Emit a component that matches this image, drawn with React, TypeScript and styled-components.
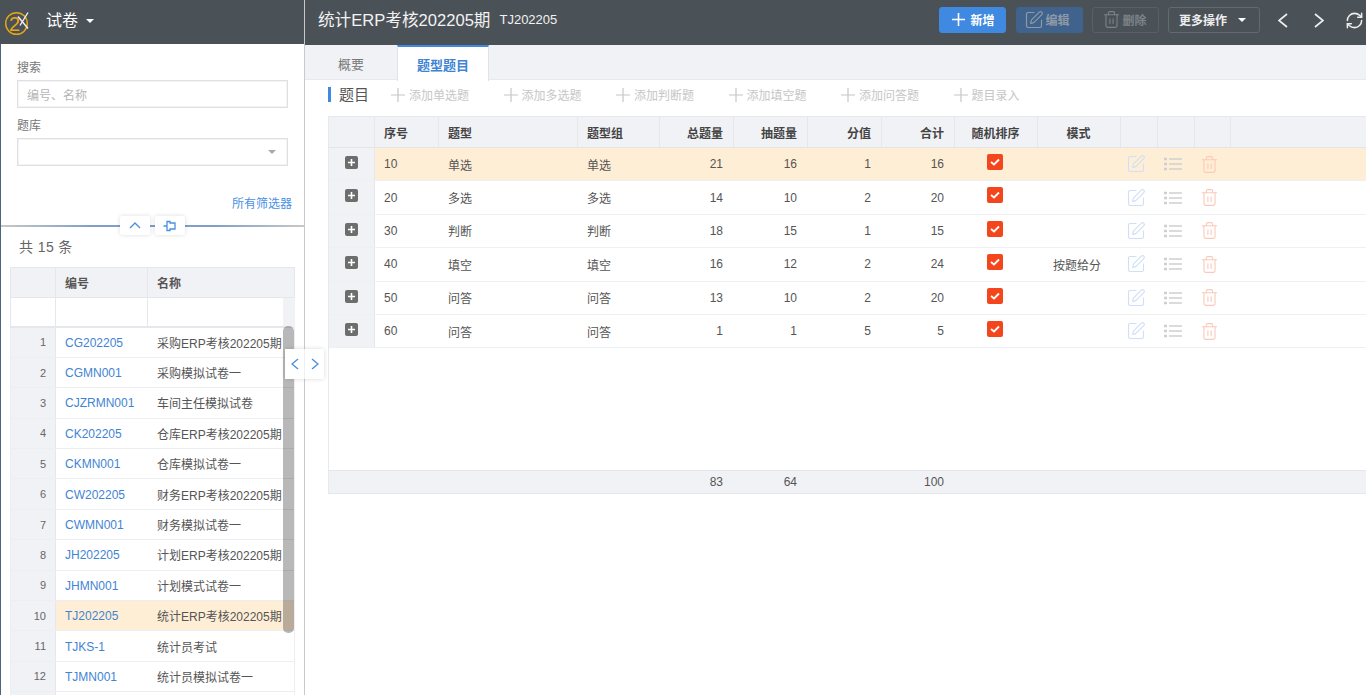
import React from 'react';
import styled, { createGlobalStyle } from 'styled-components';
import { RefreshCw, SquarePen, Trash2 } from 'lucide-react';

const GlobalStyle = createGlobalStyle`
  html, body {
    margin: 0;
    height: 100%;
    overflow: hidden;
    background: #fff;
  }
  body {
    font-family: "Liberation Sans", "Noto Sans CJK SC", sans-serif;
    font-size: 12px;
    color: #555;
  }
  * { box-sizing: border-box; }
`;

const MAIN_COLS = '46px 64px 139px 82px 74px 74px 74px 73px 83px 83px 37px 37px 36px 1fr';
const LIST_COLS = '45px 92px 1fr';

const Page = styled.div`
  display: flex;
  width: 1366px;
  height: 695px;
  overflow: hidden;
`;

const Side = styled.aside`
  position: relative;
  width: 305px;
  flex: none;
  display: flex;
  flex-direction: column;
  border-right: 1px solid #c9c9c9;
`;

const SideHead = styled.div`
  height: 44px;
  flex: none;
  background: #4a5157;
  display: flex;
  align-items: center;
  padding: 0 0 3px 2px;
  color: #fff;
  font-size: 16px;
`;

const SideTitle = styled.span`
  margin: 0 8px 3px 14px;
`;

const Caret = styled.span<{ $color?: string }>`
  display: inline-block;
  width: 0;
  height: 0;
  border-left: 4px solid transparent;
  border-right: 4px solid transparent;
  border-top: 4px solid ${p => p.$color || '#fff'};
`;

const SideBody = styled.div`
  flex: 1;
  min-height: 0;
  display: flex;
  flex-direction: column;
  border-left: 1px solid #4d6480;
`;

const Filters = styled.div`
  position: relative;
  height: 181px;
  flex: none;
  padding: 16px 16px 0 16px;
`;

const FieldLabel = styled.div<{ $compact?: boolean }>`
  height: ${p => (p.$compact ? '19px' : '20px')};
  padding-top: ${p => (p.$compact ? '0' : '1px')};
  line-height: 14px;
  color: #777;
  font-size: 12px;
`;

const TextField = styled.input`
  display: block;
  width: 271px;
  height: 28px;
  margin-bottom: 11px;
  padding: 3px 9px 0;
  border: 1px solid #e0e0e2;
  box-shadow: inset 0 0 0 1px #f4f4f6;
  outline: none;
  font: inherit;
  &::placeholder { color: #b5b5b5; }
`;

const SelectField = styled.div`
  width: 271px;
  height: 28px;
  padding-right: 11px;
  border: 1px solid #e0e0e2;
  box-shadow: inset 0 0 0 1px #f4f4f6;
  display: flex;
  align-items: center;
  justify-content: flex-end;
`;

const AllFilters = styled.a`
  position: absolute;
  right: 12px;
  top: 150px;
  color: #4a90e2;
  font-size: 12px;
`;

const Divider = styled.div`
  position: relative;
  height: 2px;
  flex: none;
  background: linear-gradient(90deg, #c8c8c8 0%, #7f9fc8 30%, #7f9fc8 70%, #c8c8c8 100%);
`;

const FoldGroup = styled.div`
  position: absolute;
  left: 119px;
  top: -9px;
  display: flex;
  gap: 5px;
`;

const FoldBtn = styled.div`
  width: 30px;
  height: 19px;
  background: #fff;
  border-radius: 2px;
  box-shadow: 0 0 4px rgba(0, 0, 0, 0.14);
  color: #4a90e2;
  display: flex;
  align-items: center;
  justify-content: center;
`;

const ListArea = styled.div`
  position: relative;
  flex: 1;
  min-height: 0;
  padding: 0 9px 0 9px;
  overflow: hidden;
`;

const Total = styled.div`
  height: 40px;
  padding: 10px 0 0 9px;
  font-size: 14px;
  line-height: 20px;
  color: #666;
  letter-spacing: 0.4px;
`;

const ListHead = styled.div`
  display: grid;
  grid-template-columns: ${LIST_COLS};
  height: 31px;
  background: #f1f2f6;
  border: 1px solid #e5e7ec;
  font-weight: 700;
  color: #555;
`;

const HeadCell = styled.div`
  display: flex;
  align-items: center;
  padding: 0 9px;
  border-right: 1px solid #e5e7ec;
  &:last-child { border-right: 0; }
`;

const ListFilterRow = styled.div`
  display: grid;
  grid-template-columns: ${LIST_COLS};
  height: 29.5px;
  border: 1px solid #e5e7ec;
  border-top: 0;
  border-right: 12px solid #f1f2f6;
  border-bottom: 2px solid #e5e7ec;
`;

const FilterCell = styled.div`
  border-right: 1px solid #e5e7ec;
  &:last-child { border-right: 0; }
`;

const ListRow = styled.div<{ $active?: boolean }>`
  display: grid;
  grid-template-columns: ${LIST_COLS};
  height: 30.4px;
  border: 1px solid #eceef2;
  border-top: 0;
  background: ${p => (p.$active ? '#ffeed6' : '#fff')};
`;

const IndexCell = styled.div`
  background: #f1f2f6;
  border-right: 1px solid #e5e7ec;
  display: flex;
  align-items: center;
  justify-content: flex-end;
  padding-right: 9px;
  font-size: 11px;
  color: #666;
`;

const CodeCell = styled.a`
  display: flex;
  align-items: center;
  padding: 1px 0 0 9px;
  color: #3f84d4;
  font-size: 12px;
`;

const NameCell = styled.div`
  display: flex;
  align-items: center;
  padding-left: 9px;
  white-space: nowrap;
  overflow: hidden;
  color: #555;
`;

const ScrollThumb = styled.div`
  position: absolute;
  left: 282px;
  top: 99px;
  width: 11px;
  height: 307px;
  border-radius: 5px;
  background: rgba(0, 0, 0, 0.28);
`;

const SplitToggle = styled.div`
  position: absolute;
  left: 285px;
  top: 349px;
  z-index: 2;
  display: flex;
  gap: 1px;
  background: #eef0f3;
  box-shadow: 0 0 4px rgba(0, 0, 0, 0.16);
  border-radius: 2px;
  color: #4a90e2;
`;

const SplitBtn = styled.div`
  width: 19px;
  height: 30px;
  background: #fff;
  display: flex;
  align-items: center;
  justify-content: center;
`;

const Main = styled.main`
  flex: 1;
  min-width: 0;
  display: flex;
  flex-direction: column;
`;

const TopBar = styled.header`
  height: 45px;
  flex: none;
  background: #4a5157;
  display: flex;
  align-items: center;
  padding: 0 0 5px 13px;
  color: #f2f2f2;
`;

const PageTitle = styled.h1`
  margin: 0 0 2px;
  font-size: 16.6px;
  font-weight: 400;
  white-space: nowrap;
`;

const PageCode = styled.span`
  margin: -1px 0 0 9px;
  font-size: 13px;
`;

const BarActions = styled.div`
  margin-left: auto;
  display: flex;
  align-items: center;
`;

const barPadding = { primary: '0 0 1px 2px', muted: '0 4px 1px 0', ghost: '0 2px 1px 0', outline: '0 3px 1px 0' };

const BarBtn = styled.button<{ $kind: 'primary' | 'muted' | 'ghost' | 'outline' }>`
  height: 26px;
  width: ${p => (p.$kind === 'outline' ? '92px' : '67px')};
  margin-right: ${p => (p.$kind === 'primary' || p.$kind === 'muted' ? '9.5px' : '9px')};
  padding: ${p => barPadding[p.$kind]};
  border-radius: 3px;
  display: flex;
  align-items: center;
  justify-content: center;
  gap: ${p => (p.$kind === 'primary' ? '5px' : '1px')};
  font: inherit;
  font-size: 12px;
  font-weight: 700;
  color: ${p => ({ primary: '#fff', muted: '#8f9aa6', ghost: '#7d8388', outline: '#eee' }[p.$kind])};
  background: ${p => ({ primary: '#3f8ae0', muted: '#3f638d', ghost: 'transparent', outline: 'transparent' }[p.$kind])};
  border: 1px solid ${p => ({ primary: '#3f8ae0', muted: '#3f638d', ghost: '#5a6066', outline: '#626a72' }[p.$kind])};
`;

const OutlineLabel = styled.span`
  margin-right: 10px;
`;

const NavIcons = styled.div`
  display: flex;
  align-items: center;
  margin-left: 2px;
  gap: 11.5px;
  color: #eee;
`;

const NavSlot = styled.span`
  width: 24px;
  display: flex;
  justify-content: center;
`;

const Tabs = styled.nav`
  height: 35px;
  flex: none;
  background: #f1f2f6;
  display: flex;
  border-bottom: 1px solid #e8e9ee;
  font-size: 13px;
`;

const Tab = styled.div<{ $active?: boolean }>`
  width: 92px;
  height: ${p => (p.$active ? '36px' : '35px')};
  display: flex;
  align-items: center;
  justify-content: center;
  color: ${p => (p.$active ? '#3f84d4' : '#777')};
  font-weight: ${p => (p.$active ? 700 : 400)};
  background: ${p => (p.$active ? '#fff' : 'transparent')};
  border-top: 2px solid ${p => (p.$active ? '#3f8ae0' : 'transparent')};
  border-left: ${p => (p.$active ? '1px solid #e2e3e8' : '0')};
  border-right: ${p => (p.$active ? '1px solid #e2e3e8' : '0')};
`;

const Section = styled.section`
  flex: 1;
  padding-left: 23px;
  min-height: 0;
`;

const ToolRow = styled.div`
  height: 36px;
  padding-bottom: 7px;
  display: flex;
  align-items: center;
`;

const SectionTitle = styled.div`
  width: 63px;
  flex: none;
  font-size: 15px;
  color: #555;
  border-left: 3px solid #3f8ae0;
  padding-left: 8px;
  line-height: 15px;
`;

const ToolBtn = styled.div`
  width: 112.5px;
  flex: none;
  display: flex;
  align-items: center;
  gap: 4px;
  color: #c6c6c6;
  font-size: 12px;
`;

const MainTable = styled.div`
  border-top: 1px solid #e6e8ed;
  border-left: 1px solid #e6e8ed;
`;

const MainHead = styled.div`
  display: grid;
  grid-template-columns: ${MAIN_COLS};
  height: 31px;
  background: #f1f2f6;
  border-bottom: 1px solid #e3e5ea;
  font-weight: 700;
  color: #444;
`;

const MainHeadCell = styled.div<{ $align?: string }>`
  display: flex;
  align-items: center;
  justify-content: ${p => p.$align || 'flex-start'};
  padding: 0 10px 0 9px;
  border-right: 1px solid #e5e7ec;
  white-space: nowrap;
  &:last-child { border-right: 0; }
`;

const MainBody = styled.div`
  height: 322px;
`;

const MainRow = styled.div<{ $active?: boolean }>`
  display: grid;
  grid-template-columns: ${MAIN_COLS};
  height: 33.4px;
  background: ${p => (p.$active ? '#ffeed6' : '#fff')};
  border-bottom: 1px solid #eff0f3;
  color: #555;
`;

const ExpandCell = styled.div`
  background: #f1f2f6;
  border-right: 1px solid #e5e7ec;
  display: flex;
  justify-content: center;
  padding-top: 8px;
`;

const ExpandBox = styled.div`
  width: 13px;
  height: 13px;
  border-radius: 2px;
  background: #6d6d6d;
  color: #fff;
  display: flex;
  align-items: center;
  justify-content: center;
`;

const Cell = styled.div<{ $align?: string }>`
  display: flex;
  align-items: center;
  justify-content: ${p => p.$align || 'flex-start'};
  padding: 0 11px 0 9px;
  white-space: nowrap;
`;

const ModeCell = styled.div`
  display: flex;
  align-items: center;
  justify-content: center;
  padding-right: 5px;
  white-space: nowrap;
`;

const CheckCell = styled.div`
  display: flex;
  justify-content: center;
  padding: 6px 3px 0 0;
`;

const CheckBox = styled.div`
  width: 16px;
  height: 16px;
  border-radius: 2px;
  background: #f4461c;
  color: #fff;
  display: flex;
  align-items: center;
  justify-content: center;
`;

const RowIcon = styled.div<{ $color: string }>`
  display: flex;
  align-items: center;
  justify-content: center;
  padding-right: 7px;
  color: ${p => p.$color};
`;

const Footer = styled.div`
  display: grid;
  grid-template-columns: ${MAIN_COLS};
  height: 24px;
  background: #f1f2f6;
  border-top: 1px solid #e5e7ec;
  border-bottom: 1px solid #e5e7ec;
  color: #555;
`;

const Logo = () => (
  <svg width="30" height="30" viewBox="0 0 30 30">
    <circle cx="14.5" cy="17.5" r="10.8" fill="none" stroke="#e6a817" strokeWidth="1.4" />
    <text x="12.5" y="24.5" textAnchor="middle" fontSize="20" fill="#e6a817" fontFamily="Liberation Sans">2</text>
    <path d="M18 19.5 L26 6.5 M16 10.5 L26 22.5" stroke="#f0f0f0" strokeWidth="1.4" />
  </svg>
);

const PinIcon = () => (
  <svg width="14" height="12" viewBox="0 0 14 12" fill="none" stroke="currentColor" strokeWidth="1.3">
    <path d="M0.5 6 H4 M4 1.5 H7 V3 H12 V9 H7 V10.5 H4 Z" />
  </svg>
);

const CheckMark = () => (
  <svg width="10" height="8" viewBox="0 0 10 8" fill="none" stroke="currentColor" strokeWidth="1.8">
    <path d="M1 4 L4 6.5 L9 1.5" />
  </svg>
);

const PlusMark = ({ size, weight = 1.2 }: { size: number; weight?: number }) => (
  <svg width={size} height={size} viewBox={`0 0 ${size} ${size}`} stroke="currentColor" strokeWidth={weight} fill="none">
    <path d={`M0 ${size / 2} H${size} M${size / 2} 0 V${size}`} />
  </svg>
);

const Chevron = ({ dir, w, h, weight = 1.4 }: { dir: 'left' | 'right' | 'up'; w: number; h: number; weight?: number }) => {
  const d = {
    left: `M${w - 1} 1 L1 ${h / 2} L${w - 1} ${h - 1}`,
    right: `M1 1 L${w - 1} ${h / 2} L1 ${h - 1}`,
    up: `M1 ${h - 1} L${w / 2} 1 L${w - 1} ${h - 1}`,
  }[dir];
  return (
    <svg width={w} height={h} viewBox={`0 0 ${w} ${h}`} fill="none" stroke="currentColor" strokeWidth={weight}>
      <path d={d} />
    </svg>
  );
};

const ListIcon = () => (
  <svg width="18" height="14" viewBox="0 0 18 14" fill="none" stroke="currentColor" strokeWidth="1.4">
    <path d="M5 2 H18 M5 7 H18 M5 12 H18" />
    <path d="M0 2 H3 M0 7 H3 M0 12 H3" strokeWidth="2.4" />
  </svg>
);

const papers = [
  ['CG202205', '采购ERP考核202205期'],
  ['CGMN001', '采购模拟试卷一'],
  ['CJZRMN001', '车间主任模拟试卷'],
  ['CK202205', '仓库ERP考核202205期'],
  ['CKMN001', '仓库模拟试卷一'],
  ['CW202205', '财务ERP考核202205期'],
  ['CWMN001', '财务模拟试卷一'],
  ['JH202205', '计划ERP考核202205期'],
  ['JHMN001', '计划模式试卷一'],
  ['TJ202205', '统计ERP考核202205期'],
  ['TJKS-1', '统计员考试'],
  ['TJMN001', '统计员模拟试卷一'],
];

const questionTypes = [
  { no: 10, type: '单选', group: '单选', total: 21, drawn: 16, score: 1, sum: 16, mode: '' },
  { no: 20, type: '多选', group: '多选', total: 14, drawn: 10, score: 2, sum: 20, mode: '' },
  { no: 30, type: '判断', group: '判断', total: 18, drawn: 15, score: 1, sum: 15, mode: '' },
  { no: 40, type: '填空', group: '填空', total: 16, drawn: 12, score: 2, sum: 24, mode: '按题给分' },
  { no: 50, type: '问答', group: '问答', total: 13, drawn: 10, score: 2, sum: 20, mode: '' },
  { no: 60, type: '问答', group: '问答', total: 1, drawn: 1, score: 5, sum: 5, mode: '' },
];

const addActions = ['添加单选题', '添加多选题', '添加判断题', '添加填空题', '添加问答题', '题目录入'];

const App: React.FC = () => (
  <Page>
    <GlobalStyle />
    <Side>
      <SideHead>
        <Logo />
        <SideTitle>试卷</SideTitle>
        <Caret />
      </SideHead>
      <SideBody>
        <Filters>
          <FieldLabel>搜索</FieldLabel>
          <TextField placeholder="编号、名称" readOnly />
          <FieldLabel $compact>题库</FieldLabel>
          <SelectField>
            <Caret $color="#aaa" />
          </SelectField>
          <AllFilters>所有筛选器</AllFilters>
        </Filters>
        <Divider>
          <FoldGroup>
            <FoldBtn><Chevron dir="up" w={12} h={7} /></FoldBtn>
            <FoldBtn><PinIcon /></FoldBtn>
          </FoldGroup>
        </Divider>
        <ListArea>
          <Total>共 15 条</Total>
          <ListHead>
            <HeadCell />
            <HeadCell>编号</HeadCell>
            <HeadCell>名称</HeadCell>
          </ListHead>
          <ListFilterRow>
            <FilterCell />
            <FilterCell />
            <FilterCell />
          </ListFilterRow>
          {papers.map(([code, name], i) => (
            <ListRow key={code} $active={code === 'TJ202205'}>
              <IndexCell>{i + 1}</IndexCell>
              <CodeCell>{code}</CodeCell>
              <NameCell>{name}</NameCell>
            </ListRow>
          ))}
          <ListRow>
            <IndexCell />
          </ListRow>
          <ScrollThumb />
        </ListArea>
      </SideBody>
      <SplitToggle>
        <SplitBtn><Chevron dir="left" w={8} h={12} /></SplitBtn>
        <SplitBtn><Chevron dir="right" w={8} h={12} /></SplitBtn>
      </SplitToggle>
    </Side>
    <Main>
      <TopBar>
        <PageTitle>统计ERP考核202205期</PageTitle>
        <PageCode>TJ202205</PageCode>
        <BarActions>
          <BarBtn $kind="primary"><PlusMark size={13} weight={1.6} />新增</BarBtn>
          <BarBtn $kind="muted"><SquarePen size={20} strokeWidth={1.4} />编辑</BarBtn>
          <BarBtn $kind="ghost"><Trash2 size={19} strokeWidth={1.4} />删除</BarBtn>
          <BarBtn $kind="outline"><OutlineLabel>更多操作</OutlineLabel><Caret /></BarBtn>
          <NavIcons>
            <NavSlot><Chevron dir="left" w={10} h={15} weight={1.7} /></NavSlot>
            <NavSlot><Chevron dir="right" w={10} h={15} weight={1.7} /></NavSlot>
            <NavSlot><RefreshCw size={19} strokeWidth={1.9} /></NavSlot>
          </NavIcons>
        </BarActions>
      </TopBar>
      <Tabs>
        <Tab>概要</Tab>
        <Tab $active>题型题目</Tab>
      </Tabs>
      <Section>
        <ToolRow>
          <SectionTitle>题目</SectionTitle>
          {addActions.map(label => (
            <ToolBtn key={label}>
              <PlusMark size={14} />
              {label}
            </ToolBtn>
          ))}
        </ToolRow>
        <MainTable>
          <MainHead>
            <MainHeadCell />
            <MainHeadCell>序号</MainHeadCell>
            <MainHeadCell>题型</MainHeadCell>
            <MainHeadCell>题型组</MainHeadCell>
            <MainHeadCell $align="flex-end">总题量</MainHeadCell>
            <MainHeadCell $align="flex-end">抽题量</MainHeadCell>
            <MainHeadCell $align="flex-end">分值</MainHeadCell>
            <MainHeadCell $align="flex-end">合计</MainHeadCell>
            <MainHeadCell $align="center">随机排序</MainHeadCell>
            <MainHeadCell $align="center">模式</MainHeadCell>
            <MainHeadCell />
            <MainHeadCell />
            <MainHeadCell />
            <MainHeadCell />
          </MainHead>
          <MainBody>
            {questionTypes.map((q, i) => (
              <MainRow key={q.no} $active={i === 0}>
                <ExpandCell>
                  <ExpandBox><PlusMark size={7} weight={1.6} /></ExpandBox>
                </ExpandCell>
                <Cell>{q.no}</Cell>
                <Cell>{q.type}</Cell>
                <Cell>{q.group}</Cell>
                <Cell $align="flex-end">{q.total}</Cell>
                <Cell $align="flex-end">{q.drawn}</Cell>
                <Cell $align="flex-end">{q.score}</Cell>
                <Cell $align="flex-end">{q.sum}</Cell>
                <CheckCell>
                  <CheckBox><CheckMark /></CheckBox>
                </CheckCell>
                <ModeCell>{q.mode}</ModeCell>
                <RowIcon $color="#cfe0f5"><SquarePen size={20} strokeWidth={1.4} /></RowIcon>
                <RowIcon $color="#cfcfcf"><ListIcon /></RowIcon>
                <RowIcon $color="#fbc9b9"><Trash2 size={19} strokeWidth={1.4} /></RowIcon>
                <div />
              </MainRow>
            ))}
          </MainBody>
          <Footer>
            <Cell />
            <Cell />
            <Cell />
            <Cell />
            <Cell $align="flex-end">83</Cell>
            <Cell $align="flex-end">64</Cell>
            <Cell />
            <Cell $align="flex-end">100</Cell>
          </Footer>
        </MainTable>
      </Section>
    </Main>
  </Page>
);

export default App;
